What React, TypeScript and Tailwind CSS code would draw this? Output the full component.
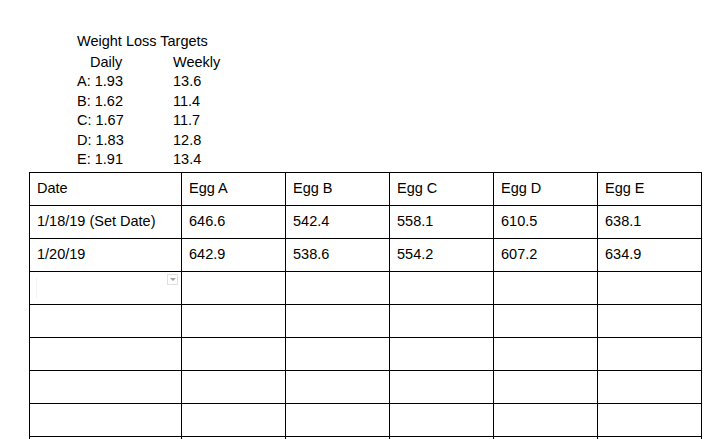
const targets = [
  ["A: 1.93", "13.6"],
  ["B: 1.62", "11.4"],
  ["C: 1.67", "11.7"],
  ["D: 1.83", "12.8"],
  ["E: 1.91", "13.4"],
];

const rows: string[][] = [
  ["Date", "Egg A", "Egg B", "Egg C", "Egg D", "Egg E"],
  ["1/18/19 (Set Date)", "646.6", "542.4", "558.1", "610.5", "638.1"],
  ["1/20/19", "642.9", "538.6", "554.2", "607.2", "634.9"],
  ["", "", "", "", "", ""],
  ["", "", "", "", "", ""],
  ["", "", "", "", "", ""],
  ["", "", "", "", "", ""],
  ["", "", "", "", "", ""],
  ["", "", "", "", "", ""],
];

export default function App() {
  return (
    <div
      className="h-[439px] w-[716px] overflow-hidden bg-white text-[14.5px] text-black"
      style={{ fontFamily: '"Liberation Sans", Arial, sans-serif' }}
    >
      {/* targets block */}
      <div className="h-[172px] pl-[77px] pt-[32px] leading-[19.5px]">
        <div className="mb-[1px]">Weight Loss Targets</div>
        <div className="grid grid-cols-[96px_auto]">
          <div className="pl-[13px]">Daily</div>
          <div>Weekly</div>
          {targets.map(([d, w]) => (
            <div key={d} className="contents">
              <div>{d}</div>
              <div>{w}</div>
            </div>
          ))}
        </div>
      </div>

      {/* egg table */}
      <div className="ml-[29px] grid w-[673px] grid-cols-[151px_103px_103px_103px_103px_103px] gap-px border border-black bg-black">
        {rows.map((row, r) =>
          row.map((cell, c) => (
            <div
              key={`${r}-${c}`}
              className="relative flex h-[32px] items-center bg-white pl-[7px]"
            >
              {cell}
              {r === 3 && c === 0 && (
                <>
                  <div className="absolute left-[6px] top-[6px] h-[20px] w-px bg-[#f2f2f2]" />
                  <div className="absolute right-[3px] top-[2px] flex h-[11px] w-[11px] items-center justify-center border border-[#e0e0e0]">
                    <div className="h-0 w-0 border-x-[3px] border-t-[3px] border-x-transparent border-t-[#a0a0a0]" />
                  </div>
                </>
              )}
            </div>
          ))
        )}
      </div>
    </div>
  );
}
